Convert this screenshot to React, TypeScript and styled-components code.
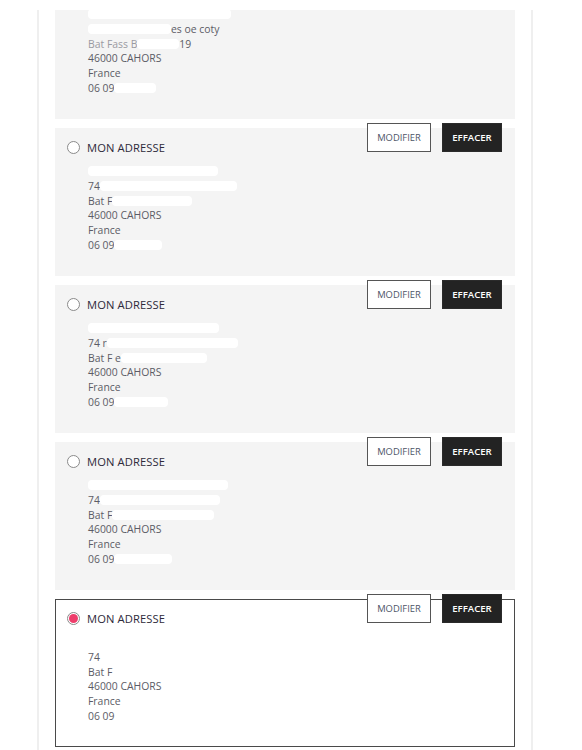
import React from "react";
import styled, { createGlobalStyle } from "styled-components";

const Global = createGlobalStyle`
  html, body { margin: 0; padding: 0; background: #ffffff; }
  body { font-family: "Open Sans", "Liberation Sans", sans-serif; }
  #root { height: 750px; overflow: hidden; }
`;

const Page = styled.div`
  padding-top: 10px;
  height: 740px;
`;

const Panel = styled.div`
  margin-left: 37px;
  width: 496px;
  height: 760px;
  box-sizing: border-box;
  border-left: 2px solid #efefef;
  border-right: 2px solid #efefef;
  padding: 0 16px;
  overflow: hidden;
`;

const List = styled.div`
  margin-top: -39px;
  display: flex;
  flex-direction: column;
  gap: 9px;
`;

const Card = styled.div<{ $selected?: boolean }>`
  position: relative;
  height: 148px;
  box-sizing: border-box;
  background: ${(p) => (p.$selected ? "#ffffff" : "#f4f4f4")};
  border: 1px solid ${(p) => (p.$selected ? "#4a4a4a" : "transparent")};
  padding: 10px 12px 0 11px;
`;

const TitleRow = styled.div`
  display: flex;
  align-items: center;
  gap: 7px;
  height: 16px;
`;

const Radio = styled.span<{ $checked?: boolean }>`
  width: 13px;
  height: 13px;
  box-sizing: border-box;
  border-radius: 50%;
  border: 1px solid #8a8a8a;
  background: #fff;
  display: flex;
  align-items: center;
  justify-content: center;
  &::after {
    content: "";
    display: ${(p) => (p.$checked ? "block" : "none")};
    width: 9px;
    height: 9px;
    border-radius: 50%;
    background: #ee3d6b;
  }
`;

const Title = styled.span`
  font-size: 11.2px;
  color: #2e2a3a;
  letter-spacing: 0.1px;
`;

const Address = styled.div`
  margin-top: 9px;
  padding-left: 21px;
  font-size: 10.4px;
  line-height: 14.8px;
  color: #5c5c66;
`;

const Line = styled.div`
  height: 14.8px;
  white-space: nowrap;
  display: flex;
  align-items: center;
`;

const Redact = styled.span<{ $w: number }>`
  display: inline-block;
  width: ${(p) => p.$w}px;
  height: 10px;
  background: #ffffff;
  border-radius: 4px;
  filter: blur(0.6px);
`;

const Faint = styled.span`
  color: #9a9aa2;
`;

const Actions = styled.div`
  position: absolute;
  top: -6px;
  right: 12px;
  display: flex;
  gap: 11px;
`;

const Btn = styled.button<{ $dark?: boolean }>`
  height: 29px;
  box-sizing: border-box;
  padding: 0 6px;
  width: ${(p) => (p.$dark ? "60px" : "64px")};
  border: 1px solid ${(p) => (p.$dark ? "#2b2b2b" : "#555")};
  background: ${(p) => (p.$dark ? "#232323" : "#ffffff")};
  color: ${(p) => (p.$dark ? "#ffffff" : "#4d5566")};
  font-family: "Open Sans", "Liberation Sans", sans-serif;
  font-size: ${(p) => (p.$dark ? "9.6px" : "9.4px")};
  font-weight: ${(p) => (p.$dark ? 600 : 400)};
  text-transform: uppercase;
  cursor: pointer;
`;

type Seg = string | number | { faint: string };
type CardData = { lines: Seg[][]; selected?: boolean };

const cards: CardData[] = [
  {
    lines: [
      [143],
      [83, "es oe coty"],
      [{ faint: "Bat Fass B" }, 42, "19"],
      ["46000 CAHORS"],
      ["France"],
      ["06 09", 42],
    ],
  },
  {
    lines: [
      [130],
      ["74", 137],
      ["Bat F", 80],
      ["46000 CAHORS"],
      ["France"],
      ["06 09", 48],
    ],
  },
  {
    lines: [
      [131],
      ["74 r", 131],
      ["Bat F e", 86],
      ["46000 CAHORS"],
      ["France"],
      ["06 09", 54],
    ],
  },
  {
    lines: [
      [140],
      ["74", 120],
      ["Bat F", 102],
      ["46000 CAHORS"],
      ["France"],
      ["06 09", 58],
    ],
  },
  {
    selected: true,
    lines: [
      [100],
      ["74"],
      ["Bat F"],
      ["46000 CAHORS"],
      ["France"],
      ["06 09"],
    ],
  },
];

function AddressCard({ data }: { data: CardData }) {
  return (
    <Card $selected={data.selected}>
      <TitleRow>
        <Radio $checked={data.selected} />
        <Title>MON ADRESSE</Title>
      </TitleRow>
      <Address>
        {data.lines.map((line, i) => (
          <Line key={i}>
            {line.map((seg, j) =>
              typeof seg === "number" ? (
                <Redact key={j} $w={seg} />
              ) : typeof seg === "string" ? (
                <span key={j}>{seg}</span>
              ) : (
                <Faint key={j}>{seg.faint}</Faint>
              )
            )}
          </Line>
        ))}
      </Address>
      <Actions>
        <Btn>Modifier</Btn>
        <Btn $dark>Effacer</Btn>
      </Actions>
    </Card>
  );
}

export default function App() {
  return (
    <>
      <Global />
      <Page>
        <Panel>
          <List>
            {cards.map((c, i) => (
              <AddressCard key={i} data={c} />
            ))}
          </List>
        </Panel>
      </Page>
    </>
  );
}
